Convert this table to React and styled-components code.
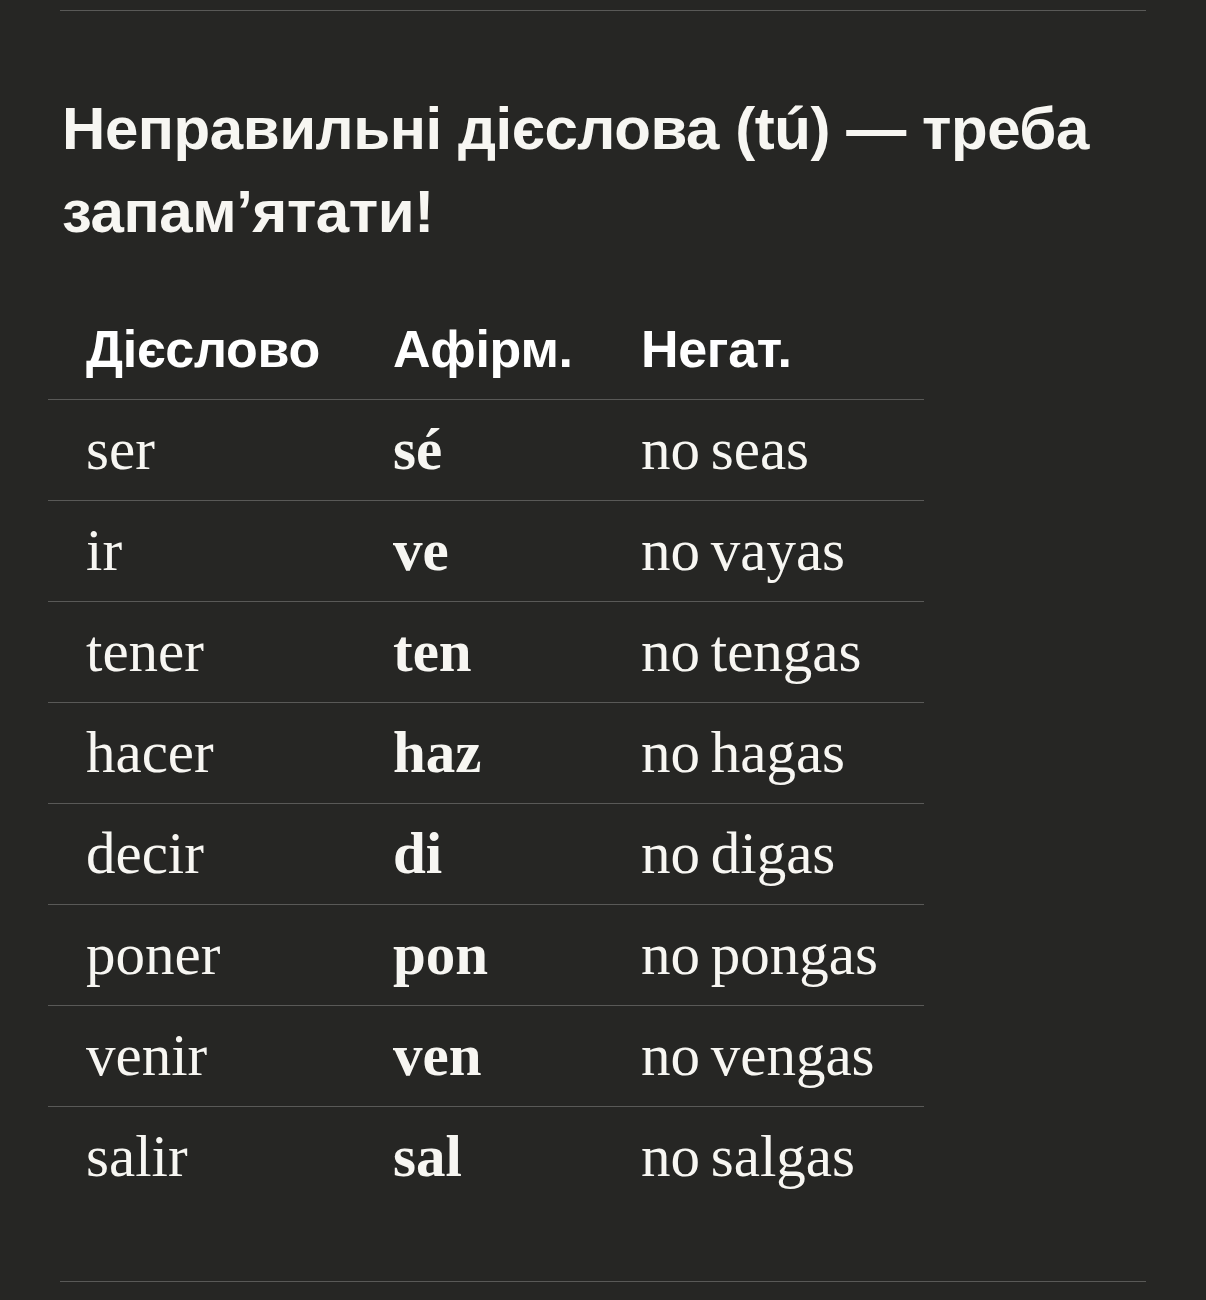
import styled, { createGlobalStyle } from "styled-components";

const GlobalStyle = createGlobalStyle`
    html, body {
        margin: 0;
        padding: 0;
        background: #262624;
    }
`;

const Page = styled.div`
    background: #262624;
    min-height: 1300px;
    padding-top: 10px;
    box-sizing: border-box;
    color: #f7f6f2;
`;

const Rule = styled.hr`
    border: none;
    border-top: 1px solid #595957;
    margin: 0 60px;
`;

const Section = styled.section`
    padding: 76px 0 74px 0;
`;

const Title = styled.h2`
    margin: 0 60px 0 62px;
    font-family: "Liberation Sans", Arial, sans-serif;
    font-weight: 700;
    font-size: 60px;
    line-height: 83px;
    letter-spacing: -0.45px;
    color: #f7f6f2;
`;

const Table = styled.table`
    margin: 46px 0 0 48px;
    border-collapse: collapse;
    table-layout: fixed;
    width: 876px;
`;

const Head = styled.th`
    width: ${(p) => p.$w}px;
    height: 100px;
    padding: 0 0 0 38px;
    text-align: left;
    vertical-align: middle;
    font-family: "Liberation Sans", Arial, sans-serif;
    font-weight: 700;
    font-size: 52px;
    letter-spacing: -0.3px;
    color: #ffffff;
    box-sizing: border-box;
`;

const Row = styled.tr`
    border-top: 1px solid #595957;
`;

const Cell = styled.td`
    height: 100px;
    padding: 0 0 0 38px;
    vertical-align: middle;
    font-family: "Liberation Serif", "Times New Roman", serif;
    font-size: 59px;
    font-weight: ${(p) => (p.$bold ? 700 : 400)};
    letter-spacing: 0;
    word-spacing: -4px;
    color: #f7f6f2;
    white-space: nowrap;
`;

const verbs = [
    ["ser", "sé", "no seas"],
    ["ir", "ve", "no vayas"],
    ["tener", "ten", "no tengas"],
    ["hacer", "haz", "no hagas"],
    ["decir", "di", "no digas"],
    ["poner", "pon", "no pongas"],
    ["venir", "ven", "no vengas"],
    ["salir", "sal", "no salgas"],
];

const App = () => {
    return (
        <>
            <GlobalStyle />
            <Page>
                <Rule />
                <Section>
                    <Title>Неправильні дієслова (tú) — треба запам’ятати!</Title>
                    <Table>
                        <thead>
                            <tr>
                                <Head $w={307}>Дієслово</Head>
                                <Head $w={248}>Афірм.</Head>
                                <Head $w={321}>Негат.</Head>
                            </tr>
                        </thead>
                        <tbody>
                            {verbs.map(([inf, aff, neg]) => (
                                <Row key={inf}>
                                    <Cell>{inf}</Cell>
                                    <Cell $bold>{aff}</Cell>
                                    <Cell>{neg}</Cell>
                                </Row>
                            ))}
                        </tbody>
                    </Table>
                </Section>
                <Rule />
            </Page>
        </>
    );
};

export default App;
